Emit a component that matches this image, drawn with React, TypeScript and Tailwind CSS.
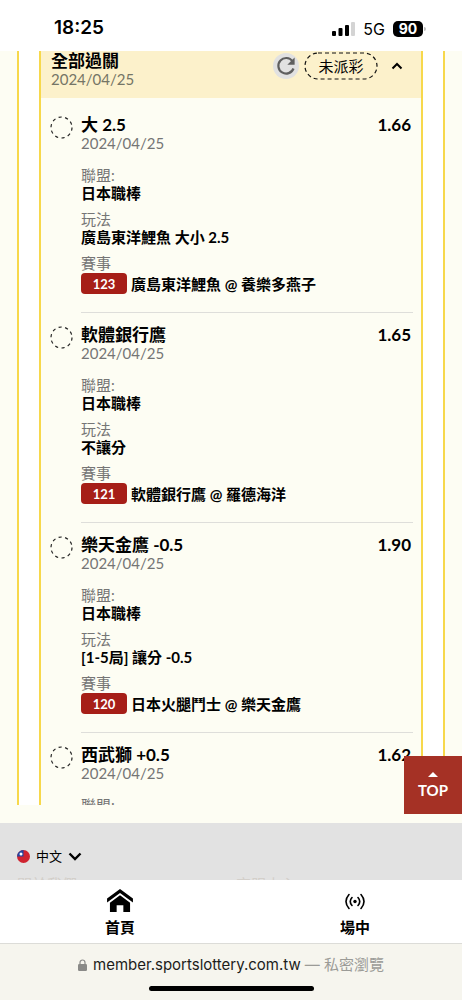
import { useState } from 'react';

type Bet = {
  id: string;
  pick: string;
  date: string;
  odds: string;
  league: string;
  market?: string;
  matchNo?: string;
  match?: string;
};

const bets: Bet[] = [
  {
    id: 'b1',
    pick: '大 2.5',
    date: '2024/04/25',
    odds: '1.66',
    league: '日本職棒',
    market: '廣島東洋鯉魚 大小 2.5',
    matchNo: '123',
    match: '廣島東洋鯉魚 @ 養樂多燕子',
  },
  {
    id: 'b2',
    pick: '軟體銀行鷹',
    date: '2024/04/25',
    odds: '1.65',
    league: '日本職棒',
    market: '不讓分',
    matchNo: '121',
    match: '軟體銀行鷹 @ 羅德海洋',
  },
  {
    id: 'b3',
    pick: '樂天金鷹 -0.5',
    date: '2024/04/25',
    odds: '1.90',
    league: '日本職棒',
    market: '[1-5局] 讓分 -0.5',
    matchNo: '120',
    match: '日本火腿鬥士 @ 樂天金鷹',
  },
  {
    id: 'b4',
    pick: '西武獅 +0.5',
    date: '2024/04/25',
    odds: '1.62',
    league: '日本職棒',
  },
];

function StatusBar() {
  return (
    <header className="flex h-[51px] shrink-0 items-center justify-between bg-white pt-1.5 pr-9 pl-[54px] font-['Inter',sans-serif]">
      <span className="text-[19px] font-semibold">18:25</span>
      <div className="flex items-center gap-2">
        <svg width="23" height="16" viewBox="0 0 23 16" aria-hidden="true">
          <rect x="0" y="10" width="4" height="5" rx="1" />
          <rect x="6.500" y="7" width="4" height="8" rx="1" />
          <rect x="13" y="4" width="4" height="11" rx="1" />
          <rect x="19" y="1" width="4" height="14" rx="1" fill="#d4d4d4" />
        </svg>
        <span className="text-base">5G</span>
        <div className="flex items-center gap-px">
          <span className="flex h-4 w-[30px] items-center justify-center rounded-[5px] bg-black text-sm font-bold text-white">
            90
          </span>
          <span className="h-1 w-0.5 rounded-r bg-[#bdbdbd]" />
        </div>
      </div>
    </header>
  );
}

function BetItem({ bet }: { bet: Bet }) {
  return (
    <li className="flex gap-2 pr-2 pl-[9px]">
      <svg className="mt-[13px] shrink-0" width="23" height="23" viewBox="0 0 23 23" aria-hidden="true">
        <circle cx="11.500" cy="11.500" r="10.500" fill="none" stroke="#222" strokeWidth="1.200" strokeDasharray="3.200 3.400" />
      </svg>
      <div className="min-w-0 flex-1 border-b border-[#dededa] pt-[13px] pb-[18px] text-[15px] leading-[18px]">
        <div className="flex justify-between pr-0.5 text-[17px] font-bold">
          <h3>{bet.pick}</h3>
          <span>{bet.odds}</span>
        </div>
        <p className="text-[#757575]">{bet.date}</p>
        <dl className="mt-3.5 flex flex-col gap-2">
          <div>
            <dt className="text-[#757575]">聯盟:</dt>
            <dd className="font-bold">{bet.league}</dd>
          </div>
          {bet.market && (
            <div>
              <dt className="text-[#757575]">玩法</dt>
              <dd className="font-bold">{bet.market}</dd>
            </div>
          )}
          {bet.match && (
            <div>
              <dt className="text-[#757575]">賽事</dt>
              <dd className="mt-px flex items-center gap-1 font-bold">
                <span className="flex h-[21px] w-[46px] items-center justify-center rounded-sm bg-[#a61e17] text-[13px] text-white">
                  {bet.matchNo}
                </span>
                {bet.match}
              </dd>
            </div>
          )}
        </dl>
      </div>
    </li>
  );
}

function TicketHeader({ open, onToggle }: { open: boolean; onToggle: () => void }) {
  return (
    <div className="flex items-start justify-between bg-[#fcf1cb] pr-[18px] pb-2.5 pl-2.5">
      <div className="pt-px text-[15px] leading-[18px]">
        <h2 className="text-[17px] font-bold">全部過關</h2>
        <p className="text-[#757566]">2024/04/25</p>
      </div>
      <div className="flex items-center pt-px">
        <button type="button" aria-label="重新整理" className="flex size-[26px] items-center justify-center rounded-full bg-[#e1e1e1]">
          <svg width="20" height="20" viewBox="0 0 20 20" fill="none" aria-hidden="true">
            <path d="M16.500 5.200A7.800 7.800 0 1 0 17.500 12.500" stroke="#5f5f5f" strokeWidth="2.200" />
            <path d="M18.600 1.500v7.300h-7.300z" fill="#5f5f5f" />
          </svg>
        </button>
        <span className="relative ml-[5px] flex h-7 w-[74px] items-center justify-center text-[15px]">
          <svg className="absolute inset-0 size-full" aria-hidden="true">
            <rect x="1" y="1" width="72" height="26" rx="13" fill="none" stroke="#111" strokeWidth="1.200" strokeDasharray="4 3" />
          </svg>
          未派彩
        </span>
        <button type="button" aria-label="收合" aria-expanded={open} onClick={onToggle} className="ml-[13px]">
          <svg width="12" height="8" viewBox="0 0 12 8" fill="none" aria-hidden="true">
            <path d="M1.500 6.500 6 2l4.500 4.500" stroke="#000" strokeWidth="2" />
          </svg>
        </button>
      </div>
    </div>
  );
}

function LanguageFooter() {
  return (
    <footer className="h-[57px] shrink-0 overflow-hidden bg-[#e2e2e2] px-[17px] pt-6">
      <button type="button" className="flex items-center gap-1.5 text-[13px] leading-[18px]">
        <svg width="13" height="13" viewBox="0 0 26 26" aria-hidden="true">
          <circle cx="13" cy="13" r="13" fill="#cf2330" />
          <path d="M13 0v13H0A13 13 0 0 1 13 0z" fill="#2446a0" />
          <circle cx="8" cy="8" r="3" fill="#fff" />
        </svg>
        中文
        <svg width="14" height="9" viewBox="0 0 14 9" fill="none" aria-hidden="true">
          <path d="M1.500 1.500 7 7l5.500-5.500" stroke="#000" strokeWidth="2.400" />
        </svg>
      </button>
      <div className="mt-2.5 grid grid-cols-2 gap-2.5 text-[15px] leading-[18px] text-[#d3cfca]">
        <a href="#about">關於我們</a>
        <a href="#service">客服中心</a>
      </div>
    </footer>
  );
}

function BottomNav() {
  return (
    <nav className="grid h-[63px] shrink-0 grid-cols-2 gap-[21px] bg-white pl-[13px] text-[15px] leading-[18px] font-bold">
      <a href="#home" className="flex flex-col items-center justify-end gap-1.5 pb-[7px]">
        <svg width="26" height="23" viewBox="0 0 27 24" aria-hidden="true">
          <path d="M13.500 0 27 10v4.200L13.500 4.200 0 14.200V10z" />
          <path d="M13.500 6.500 24 14.300V24h-7v-7h-7v7H3v-9.700z" />
        </svg>
        首頁
      </a>
      <a href="#live" className="flex flex-col items-center justify-end gap-2 pb-[7px]">
        <svg width="20" height="17" viewBox="0 0 20 17" fill="none" stroke="#000" strokeWidth="1.600" strokeLinecap="round" aria-hidden="true">
          <path d="M4 1.500Q-2 8.500 4 15.500M7 4.500Q3.500 8.500 7 12.500M13 4.500Q16.500 8.500 13 12.500M16 1.500Q22 8.500 16 15.500" />
          <circle cx="10" cy="8.500" r="1.700" fill="#000" stroke="none" />
        </svg>
        場中
      </a>
    </nav>
  );
}

function BrowserBar() {
  return (
    <div className="flex h-[57px] shrink-0 flex-col items-center justify-between border-t border-[#dcdcd8] bg-[#f6f5ee] pt-3 pb-[9px]">
      <div className="flex items-center text-[15px] leading-[18px] font-['Inter','Noto_Sans_CJK_TC',sans-serif]">
        <svg className="mr-1.5" width="9" height="12" viewBox="0 0 9 12" aria-hidden="true">
          <rect x="0" y="5" width="9" height="7" rx="1.200" fill="#8a8a88" />
          <path d="M2 5.500V3.500a2.500 2.500 0 0 1 5 0v2" fill="none" stroke="#8a8a88" strokeWidth="1.200" />
        </svg>
        <span className="text-[#1c1c1a]">member.sportslottery.com.tw</span>
        <span className="ml-1 text-[#9b9b97]">— 私密瀏覽</span>
      </div>
      <div className="h-[5px] w-[165px] rounded-full bg-black" />
    </div>
  );
}

export default function App() {
  const [open, setOpen] = useState(true);

  return (
    <div className="flex h-screen flex-col overflow-hidden bg-[#fdfdf3] font-['Lato','Noto_Sans_CJK_TC',sans-serif] text-black">
      <StatusBar />
      <main className="relative flex min-h-0 flex-1 flex-col">
        <div className="mx-[17px] mb-[18px] min-h-0 flex-1 overflow-hidden border-x-2 border-[#f7d84b] bg-white px-5">
          <section className="min-h-full border-x-2 border-[#f7d84b] bg-[#fdfdf3]">
            <TicketHeader open={open} onToggle={() => setOpen(!open)} />
            {open && (
              <ul className="pt-[5px]">
                {bets.map((bet) => (
                  <BetItem key={bet.id} bet={bet} />
                ))}
              </ul>
            )}
          </section>
        </div>
        <LanguageFooter />
        <button
          type="button"
          onClick={() => window.scrollTo({ top: 0, behavior: 'smooth' })}
          className="absolute right-0 bottom-[66px] flex size-[58px] flex-col items-center justify-center gap-1 bg-[#a53125] text-[15px] leading-[18px] font-bold text-white"
        >
          <svg width="10" height="5" viewBox="0 0 10 5" fill="#fff" aria-hidden="true">
            <path d="M5 0l5 5H0z" />
          </svg>
          TOP
        </button>
      </main>
      <BottomNav />
      <BrowserBar />
    </div>
  );
}
